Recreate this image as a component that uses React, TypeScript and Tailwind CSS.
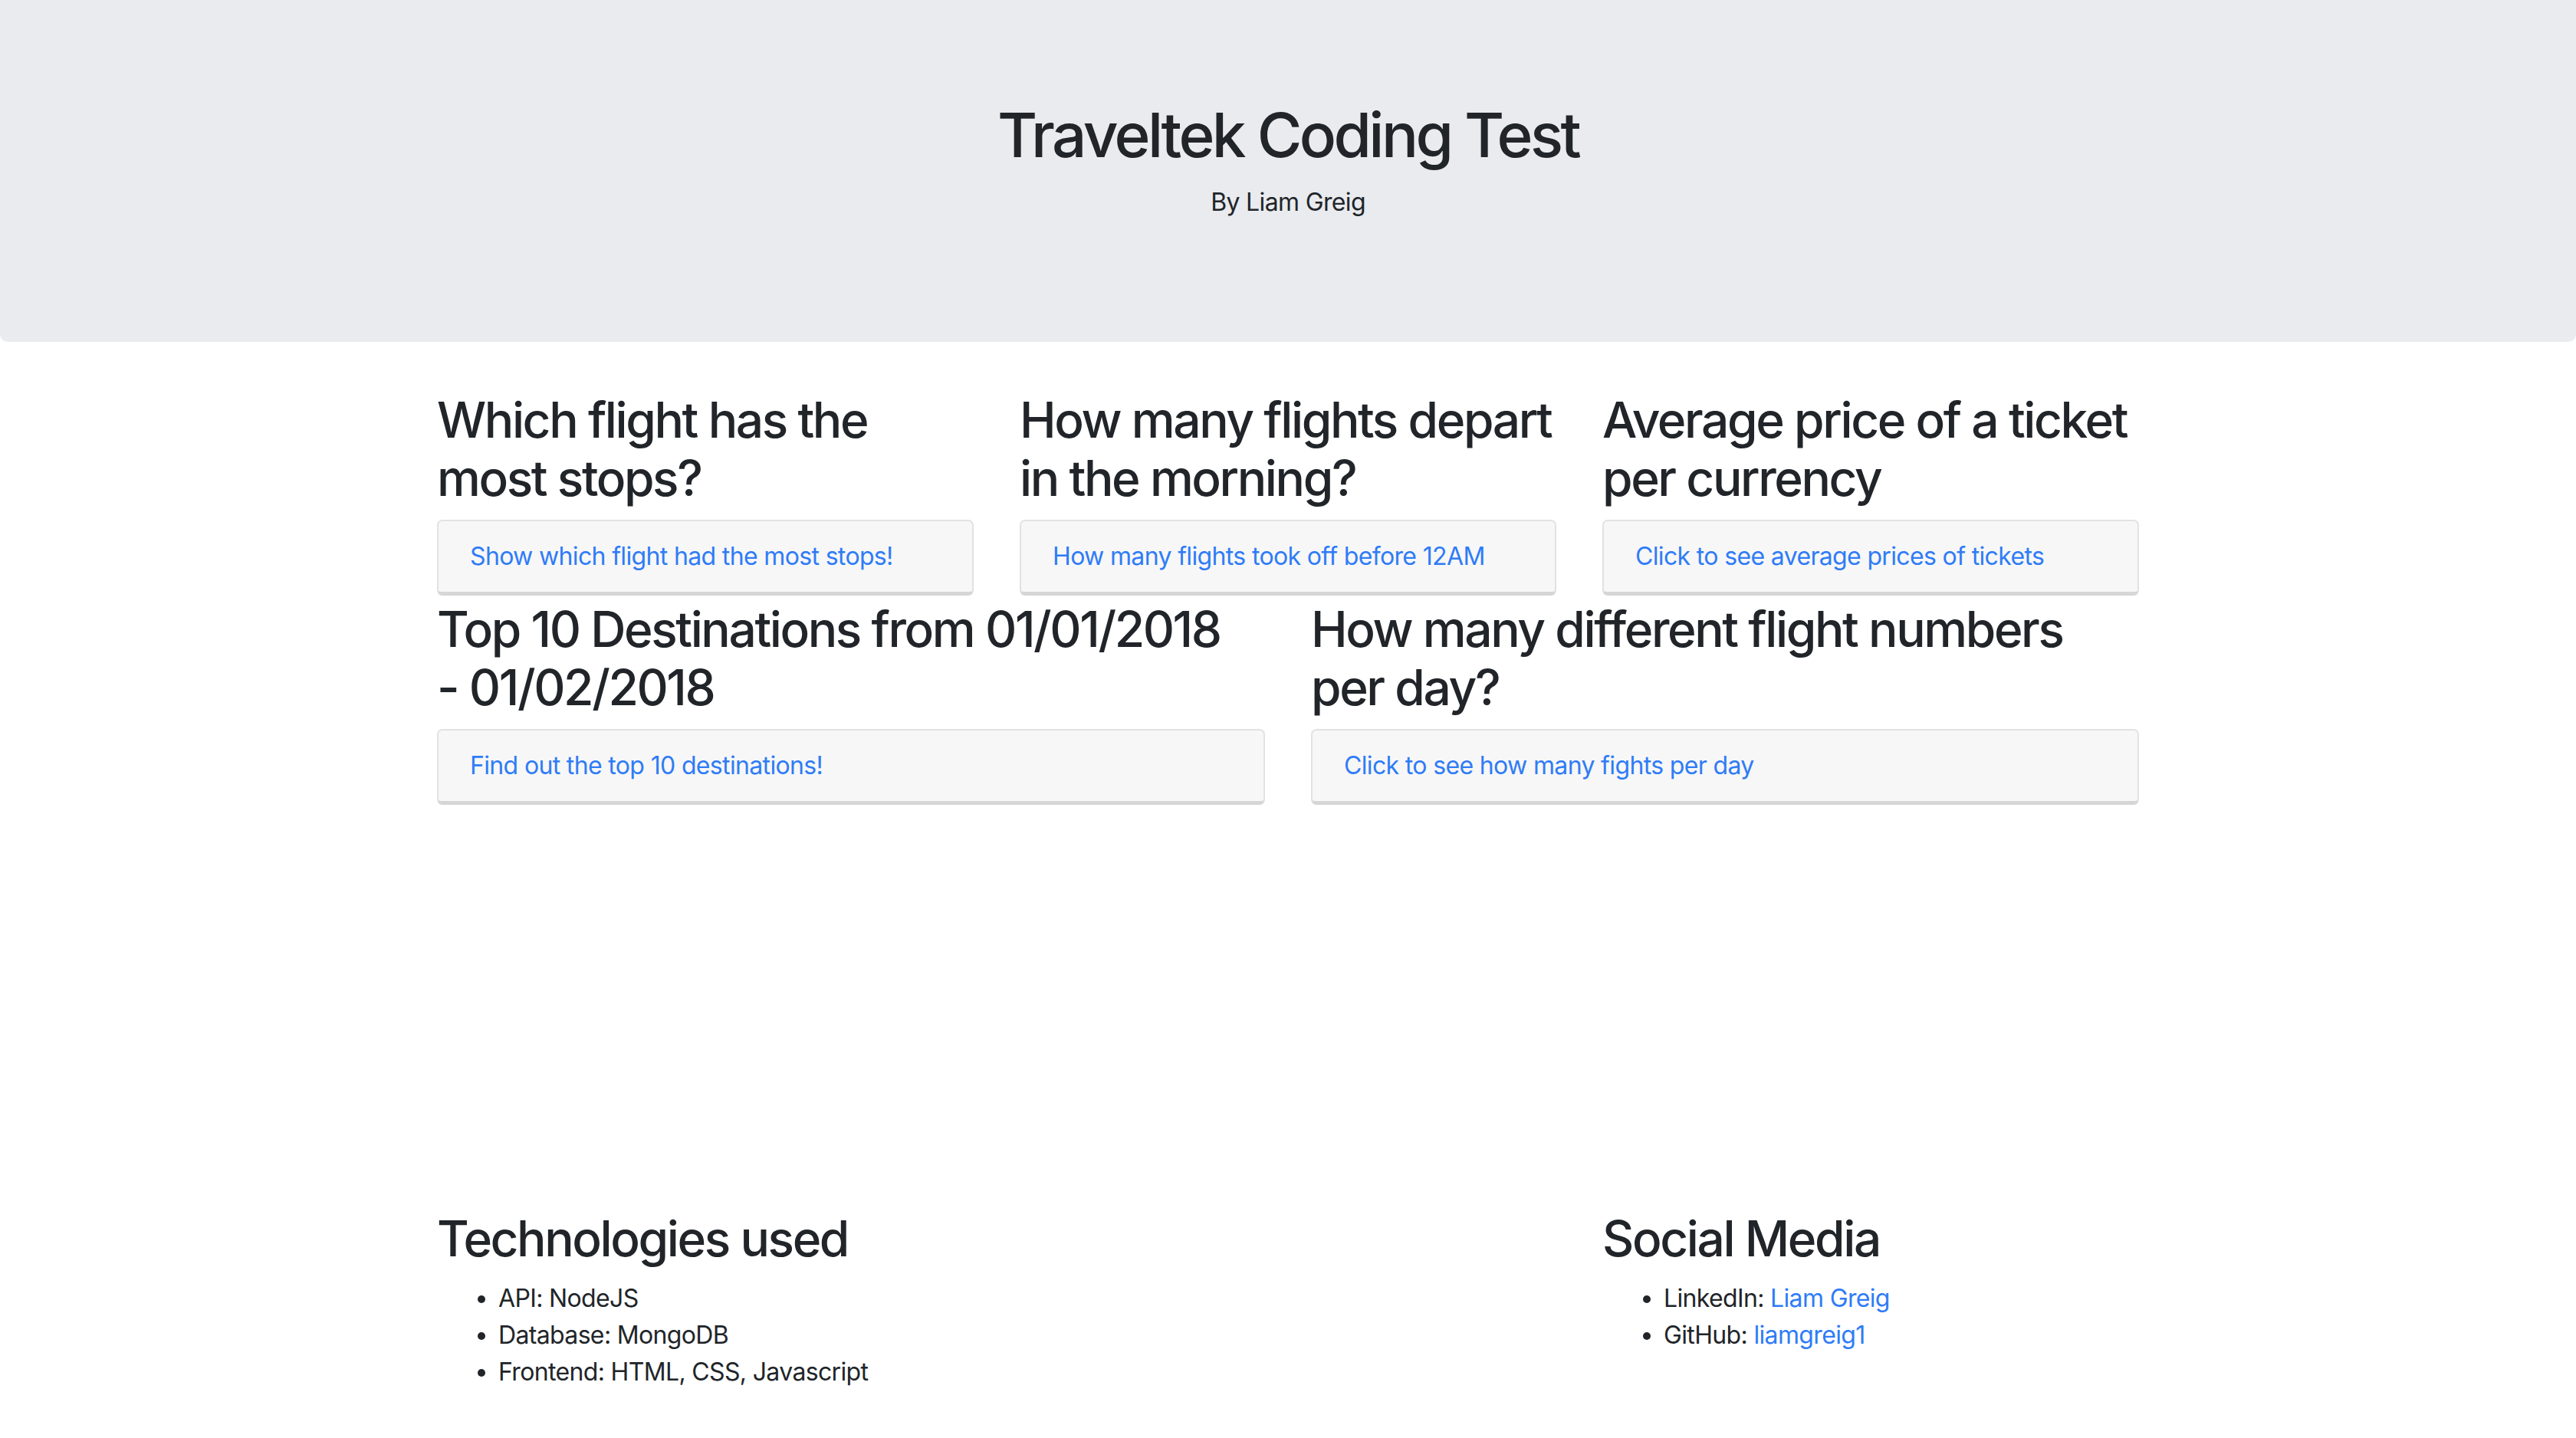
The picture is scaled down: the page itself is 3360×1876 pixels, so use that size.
import type { ReactNode } from "react";

const font = { fontFamily: "Inter, 'Noto Sans', sans-serif" };

function QuestionButton({ label }: { label: string }) {
  return (
    <button className="w-full h-[99px] text-left px-[41px] bg-[#f7f7f7] border-2 border-[#e2e2e2] border-b-[5px] border-b-[#d6d6d6] rounded-[7px] text-[32px] leading-[48px] text-[#2f7cf6] tracking-[-0.65px]">
      {label}
    </button>
  );
}

function Question({ title, label }: { title: ReactNode; label: string }) {
  return (
    <div className="px-[30px]">
      <h2 className="text-[64px] leading-[76px] font-medium text-[#212529] mb-[16px] tracking-[-2.4px]">{title}</h2>
      <QuestionButton label={label} />
    </div>
  );
}

export default function App() {
  return (
    <div style={font} className="min-h-screen bg-white text-[#212529]">
      <header className="bg-[#e9ebef] rounded-b-[10px] h-[446px] pt-[128px] text-center">
        <h1 className="text-[80px] leading-[96px] font-medium tracking-[-3.6px] mb-[16px]">Traveltek Coding Test</h1>
        <p className="text-[32px] leading-[48px] tracking-[-0.65px]">By Liam Greig</p>
      </header>

      <main className="w-[2280px] mx-auto mt-[64px]">
        <div className="grid grid-cols-3">
          <Question title="Which flight has the most stops?" label="Show which flight had the most stops!" />
          <Question title="How many flights depart in the morning?" label="How many flights took off before 12AM" />
          <Question title="Average price of a ticket per currency" label="Click to see average prices of tickets" />
        </div>
        <div className="grid grid-cols-2 mt-[6px]">
          <Question
            title={
              <>
                Top 10 Destinations from 01/01/2018 <span className="whitespace-nowrap">- 01/02/2018</span>
              </>
            }
            label="Find out the top 10 destinations!"
          />
          <Question title="How many different flight numbers per day?" label="Click to see how many fights per day" />
        </div>

        <footer className="grid grid-cols-3 mt-[528px]">
          <div className="col-span-2 px-[30px]">
            <h2 className="text-[64px] leading-[76px] font-medium mb-[16px] tracking-[-2.4px]">Technologies used</h2>
            <ul className="list-disc pl-[80px] text-[32px] leading-[48px] tracking-[-0.65px]">
              <li>API: NodeJS</li>
              <li>Database: MongoDB</li>
              <li>Frontend: HTML, CSS, Javascript</li>
            </ul>
          </div>
          <div className="px-[30px]">
            <h2 className="text-[64px] leading-[76px] font-medium mb-[16px] tracking-[-2.4px]">Social Media</h2>
            <ul className="list-disc pl-[80px] text-[32px] leading-[48px] tracking-[-0.65px]">
              <li>
                LinkedIn: <a className="text-[#2f7cf6]">Liam Greig</a>
              </li>
              <li>
                GitHub: <a className="text-[#2f7cf6]">liamgreig1</a>
              </li>
            </ul>
          </div>
        </footer>
      </main>
    </div>
  );
}
